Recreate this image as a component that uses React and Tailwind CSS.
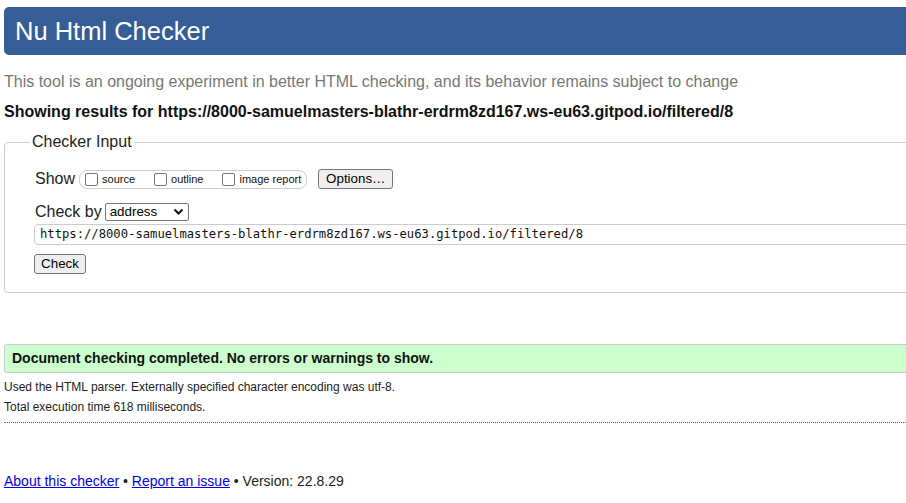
const font = { fontFamily: '"Liberation Sans", Arial, sans-serif' };

const url = 'https://8000-samuelmasters-blathr-erdrm8zd167.ws-eu63.gitpod.io/filtered/8';

function Box({ label }) {
  return (
    <span className="flex items-center gap-[4px]">
      <span className="w-[13px] h-[13px] border border-[#767676] rounded-[2px] bg-white" />
      <span className="text-[11px] leading-[13px] text-[#111]">{label}</span>
    </span>
  );
}

function Btn({ children, className = '' }) {
  return (
    <span
      className={`inline-flex items-center justify-center h-[20px] bg-[#efefef] border border-[#767676] rounded-[3px] text-[13.33px] text-black ${className}`}
    >
      {children}
    </span>
  );
}

export default function App() {
  return (
    <div className="w-[906px] h-[503px] overflow-hidden bg-white pl-[4px]" style={font}>
      {/* Header bar */}
      <div className="mt-[7px] mr-[-20px] h-[48px] rounded-l-[5px] bg-[#365d95] flex items-center pl-[11px]">
        <h1 className="text-white text-[25.5px] leading-[30px]">Nu Html Checker</h1>
      </div>

      <p className="mt-[18px] text-[16px] leading-[18px] text-[#777]">
        This tool is an ongoing experiment in better HTML checking, and its behavior remains subject to change
      </p>
      <p className="mt-[12px] text-[16px] leading-[18px] font-bold text-[#111]">
        Showing results for {url}
      </p>

      {/* Checker input */}
      <fieldset className="mt-[12px] mr-[-20px] border border-[#ccc] rounded-[4px] pl-[29px] pt-[17px] pb-[18px]">
        <legend className="ml-[-4px] px-[2px] text-[16px] leading-[18px] text-[#222]">Checker Input</legend>

        <div className="flex items-center h-[22px]">
          <span className="text-[16px] leading-[18px] text-[#222] ml-[1px]">Show</span>
          <span className="ml-[4px] h-[19px] flex items-center gap-[19px] border border-[#ccc] rounded-[8px] pl-[5px] pr-[5px]">
            <Box label="source" />
            <Box label="outline" />
            <Box label="image report" />
          </span>
          <Btn className="ml-[11px] w-[75px]">Options…</Btn>
        </div>

        <div className="flex items-center h-[22px] mt-[11px]">
          <span className="text-[16px] leading-[18px] text-[#222] ml-[1px]">Check by</span>
          <span className="ml-[3px] w-[84px] h-[18px] border border-[#767676] rounded-[2px] bg-white flex items-center justify-between pl-[4px] pr-[4px]">
            <span className="text-[13.33px] leading-[16px] text-black">address</span>
            <svg width="11" height="8" viewBox="0 0 11 8">
              <path d="M1.5 1.5 L5.5 5.5 L9.5 1.5" fill="none" stroke="#111" strokeWidth="2" />
            </svg>
          </span>
        </div>

        <div className="mt-[1px] h-[21px] border border-[#ccc] rounded-l-[4px] flex items-center pl-[5px]">
          <span className="text-[12.2px] leading-[15px] text-[#111]" style={{ fontFamily: '"DejaVu Sans Mono", monospace' }}>
            {url}
          </span>
        </div>

        <div className="mt-[9px] flex">
          <Btn className="w-[52px]">Check</Btn>
        </div>
      </fieldset>

      {/* Result */}
      <div className="mt-[51px] mr-[-20px] h-[29px] bg-[#ccffcc] border border-[#c8c8c8] rounded-l-[3px] flex items-center pl-[7px]">
        <span className="text-[14px] font-bold text-[#111]">
          Document checking completed. No errors or warnings to show.
        </span>
      </div>

      <p className="mt-[7px] text-[12px] leading-[15px] text-[#222]">
        Used the HTML parser. Externally specified character encoding was utf-8.
      </p>
      <p className="mt-[5px] text-[12px] leading-[15px] text-[#222]">
        Total execution time 618 milliseconds.
      </p>
      <div className="mt-[7px] border-b border-dotted border-[#666]" />

      <p className="mt-[50px] text-[14px] leading-[16px] text-[#222]">
        <a className="text-[#0000ee] underline" href="#">About this checker</a>
        {' • '}
        <a className="text-[#0000ee] underline" href="#">Report an issue</a>
        {' • Version: 22.8.29'}
      </p>
    </div>
  );
}
